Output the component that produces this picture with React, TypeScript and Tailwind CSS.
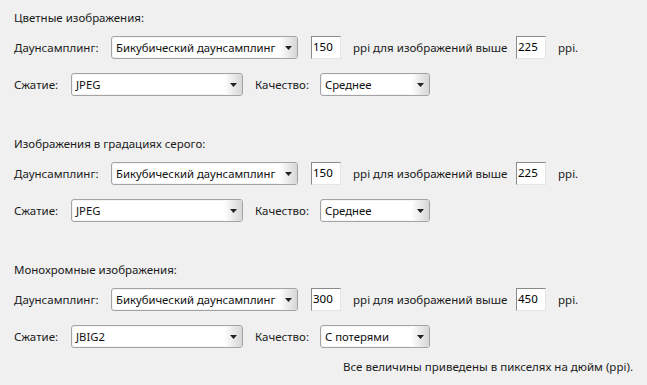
import React from 'react';

const font = { fontFamily: '"Noto Sans", "Open Sans", sans-serif' };

const Select: React.FC<{ value: string; width: string }> = ({ value, width }) => (
  <div
    className={`flex h-[23px] ${width} items-center rounded-[3px] border border-[#a3a3a3] bg-white pl-[4px] shadow-[inset_0_0_0_1px_#f4f4f4]`}
  >
    <span className="min-w-0 flex-1 whitespace-nowrap text-[11.3px] leading-[16px] text-[#101010]">{value}</span>
    <div className="flex h-full w-[18px] shrink-0 items-center justify-center rounded-r-[2px] bg-gradient-to-r from-white to-[#d6d6d6]">
      <svg width="7" height="4" viewBox="0 0 7 4">
        <path d="M0 0h7L3.5 4z" fill="#222" />
      </svg>
    </div>
  </div>
);

const NumBox: React.FC<{ value: string }> = ({ value }) => (
  <div className="flex h-[23px] w-[30px] items-start border-t border-l border-[#8a8a8a] border-r border-b border-r-[#e5e5e5] border-b-[#e5e5e5] bg-white pt-[2px] pl-[1px] text-[11.5px] leading-[16px] text-black">
    {value}
  </div>
);

interface Section {
  title: string;
  dpi: string;
  above: string;
  compression: string;
  quality: string;
}

const sections: Section[] = [
  { title: 'Цветные изображения:', dpi: '150', above: '225', compression: 'JPEG', quality: 'Среднее' },
  { title: 'Изображения в градациях серого:', dpi: '150', above: '225', compression: 'JPEG', quality: 'Среднее' },
  { title: 'Монохромные изображения:', dpi: '300', above: '450', compression: 'JBIG2', quality: 'С потерями' },
];

const Block: React.FC<{ s: Section }> = ({ s }) => (
  <div className="flex flex-col">
    <div className="h-[16px] text-[11.5px] leading-[16px]">{s.title}</div>
    <div className="mt-[10px] flex h-[23px] items-center text-[11.5px]">
      <span className="w-[97px]">Даунсамплинг:</span>
      <Select value="Бикубический даунсамплинг" width="w-[187px]" />
      <div className="ml-[13px]">
        <NumBox value={s.dpi} />
      </div>
      <span className="ml-[12px] w-[163px] whitespace-nowrap">ppi для изображений выше</span>
      <NumBox value={s.above} />
      <span className="ml-[12px]">ppi.</span>
    </div>
    <div className="mt-[14px] flex h-[23px] items-center text-[11.5px]">
      <span className="w-[57px]">Сжатие:</span>
      <Select value={s.compression} width="w-[172px]" />
      <span className="ml-[12px] w-[65px]">Качество:</span>
      <Select value={s.quality} width="w-[110px]" />
    </div>
  </div>
);

export default function App() {
  return (
    <div
      className="flex h-[385px] w-[647px] flex-col gap-[40px] bg-[#f0f0f0] pt-[10px] pl-[14px] pr-[14px] text-[#1a1a1a]"
      style={font}
    >
      {sections.map((s) => (
        <Block key={s.title} s={s} />
      ))}
      <div className="-mt-[29px] text-right text-[11.5px] leading-[16px]">
        Все величины приведены в пикселях на дюйм (ppi).
      </div>
    </div>
  );
}
